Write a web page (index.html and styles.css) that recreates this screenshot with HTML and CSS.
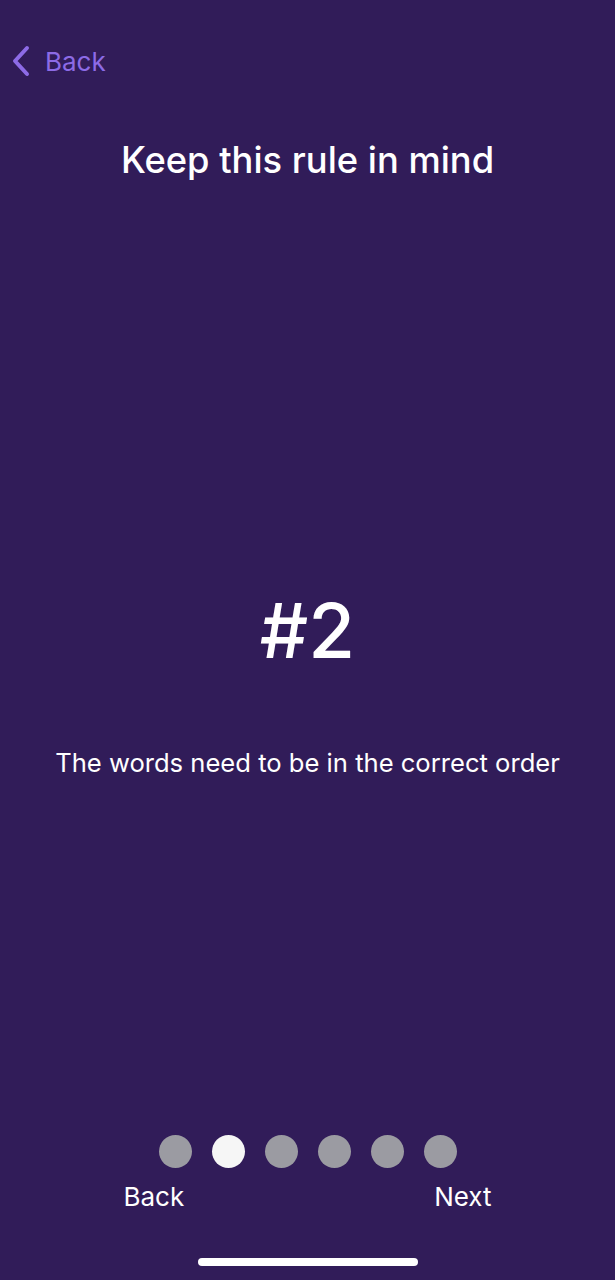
FILE: index.html
```html
<!DOCTYPE html>
<html>
<head>
<meta charset="utf-8">
<link rel="stylesheet" href="styles.css">
</head>
<body>
<div class="screen">
  <header class="topbar">
    <div class="back-link">
      <svg class="chevron" width="20" height="32" viewBox="0 0 20 32"><path d="M16 3 L4 16 L16 29" fill="none" stroke="#8d6be6" stroke-width="4" stroke-linecap="round" stroke-linejoin="round"/></svg>
      <span>Back</span>
    </div>
  </header>
  <h1 class="title">Keep this rule in mind</h1>
  <main class="content">
    <div class="number">#2</div>
    <p class="rule">The words need to be in the correct order</p>
  </main>
  <footer class="footer">
    <div class="dots">
      <span class="dot"></span>
      <span class="dot active"></span>
      <span class="dot"></span>
      <span class="dot"></span>
      <span class="dot"></span>
      <span class="dot"></span>
    </div>
    <div class="nav">
      <span class="nav-btn">Back</span>
      <span class="nav-btn">Next</span>
    </div>
    <div class="home-indicator"></div>
  </footer>
</div>
</body>
</html>
```
FILE: styles.css
```css
html, body {
  margin: 0;
  padding: 0;
  background: #311c59;
}
body {
  font-family: Inter, "Liberation Sans", sans-serif;
  color: #ffffff;
}
.screen {
  width: 615px;
  height: 1280px;
  display: flex;
  flex-direction: column;
  box-sizing: border-box;
}
.topbar {
  height: 122px;
  padding-top: 44px;
  padding-left: 11px;
  box-sizing: border-box;
}
.back-link {
  display: flex;
  align-items: center;
  gap: 14px;
  color: #8d6be6;
  font-size: 26px;
  height: 34px;
}
.chevron {
  display: block;
}
.title {
  margin: 0;
  text-align: center;
  font-weight: 500;
  font-size: 36.3px;
  line-height: 76px;
}
.content {
  flex: 1;
  display: flex;
  flex-direction: column;
  align-items: center;
  padding-top: 392px;
}
.number {
  font-size: 76px;
  font-weight: 500;
  line-height: 80px;
}
.rule {
  margin: 0;
  margin-top: 78px;
  font-size: 25.6px;
  line-height: 30px;
}
.footer {
  display: flex;
  flex-direction: column;
  align-items: center;
  padding-bottom: 14px;
}
.dots {
  display: flex;
  gap: 20px;
  margin-bottom: 2px;
}
.dot {
  width: 33px;
  height: 33px;
  border-radius: 50%;
  background: #9b9ba2;
}
.dot.active {
  background: #f6f6f6;
}
.nav {
  width: 368px;
  display: flex;
  justify-content: space-between;
  margin-top: 12px;
  font-size: 26px;
  line-height: 30px;
}
.home-indicator {
  margin-top: 46px;
  width: 220px;
  height: 8px;
  border-radius: 4px;
  background: #ffffff;
}
```
